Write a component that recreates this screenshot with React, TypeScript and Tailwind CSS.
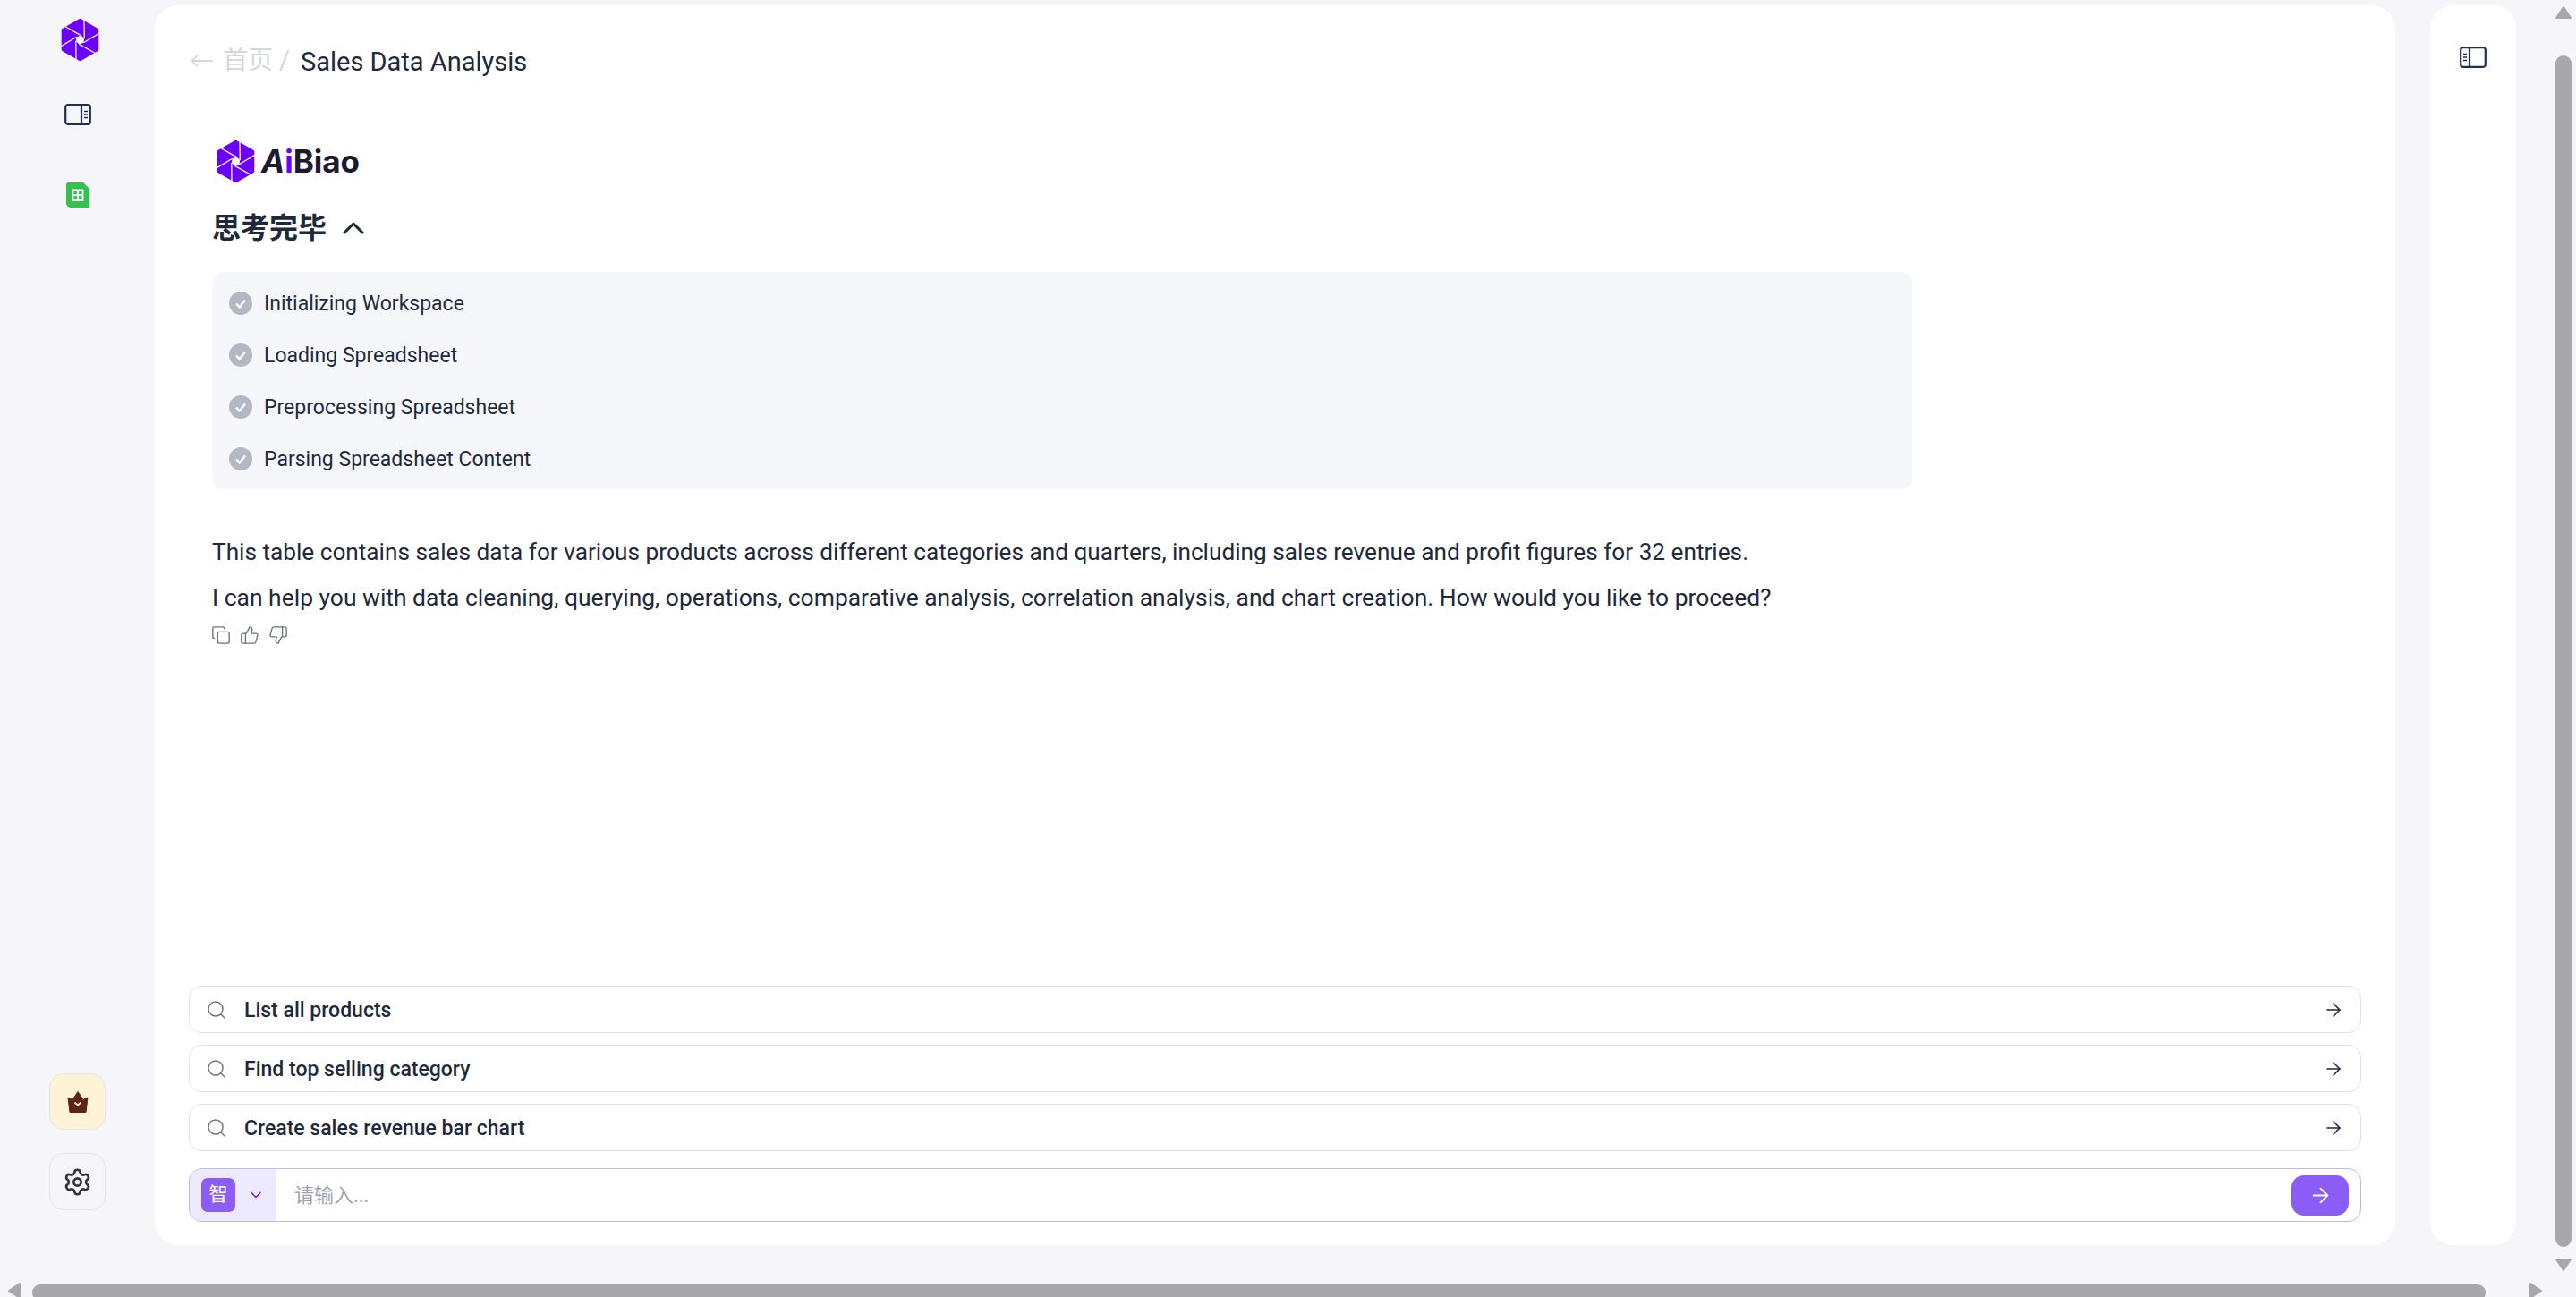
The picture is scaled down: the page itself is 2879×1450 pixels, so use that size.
import { ArrowRight, ChevronDown, ChevronUp, Copy, Search, Settings, ThumbsDown, ThumbsUp } from "lucide-react";

const steps = ["Initializing Workspace", "Loading Spreadsheet", "Preprocessing Spreadsheet", "Parsing Spreadsheet Content"];
const suggestions = ["List all products", "Find top selling category", "Create sales revenue bar chart"];
const angles = [0, 60, 120, 180, 240, 300];

function Logo({ gap, className }: { gap: string; className: string }) {
  return (
    <svg viewBox="-24 -25 48 50" className={className}>
      <path d="M0-22.5L19.5-11.2V11.2L0 22.5L-19.5 11.2V-11.2Z" fill="#6b00ff" stroke="#6b00ff" strokeWidth="3.5" strokeLinejoin="round" />
      {angles.map((a) => (
        <line key={a} x1="-20" y1="-16.8" x2="1" y2="-5" stroke={gap} strokeWidth="1.3" transform={`rotate(${a})`} />
      ))}
      <path d="M1-5L4.83-1.63L3.83 3.37L-1 5L-4.83 1.63L-3.83-3.37Z" fill={gap} />
    </svg>
  );
}

function PanelIcon({ flip, className }: { flip?: boolean; className: string }) {
  return (
    <svg viewBox="0 0 30 24" fill="none" className={className} style={flip ? { transform: "scaleX(-1)" } : undefined}>
      <rect x="1.2" y="1.2" width="27.6" height="21.6" rx="2.5" stroke="#1e2f4f" strokeWidth="2.2" />
      <path d="M19 1.5V22.5" stroke="#1e2f4f" strokeWidth="2.2" />
      <path d="M22 8.5H26M22 12H26M22 15.5H26" stroke="#1e2f4f" strokeWidth="1.6" />
    </svg>
  );
}

function SheetIcon() {
  return (
    <svg viewBox="0 0 26 28" className="h-[28px] w-[26px]">
      <path d="M0 2.5A2.5 2.5 0 0 1 2.500 0H19L26 7V28H5A5 5 0 0 1 0 23Z" fill="#34bf4f" />
      <path d="M7.500 8.500H18.500V20H7.500ZM13 8.500V20M7.500 14.200H18.500" fill="none" stroke="#fff" strokeWidth="1.800" />
    </svg>
  );
}

function CrownIcon() {
  return (
    <svg viewBox="0 0 24 24" className="h-[24px] w-[24px]">
      <path d="M1 7L6 9.500L12 0.500L18 9.500L23 7L21 23.500H3Z" fill="#5c2415" stroke="#5c2415" strokeLinejoin="round" />
      <path d="M8.500 12.500L12 15.500L15.500 12.500" fill="none" stroke="#fde9c0" strokeWidth="2" />
    </svg>
  );
}

function CheckDot() {
  return (
    <svg viewBox="0 0 26 26" className="h-[26px] w-[26px] shrink-0">
      <circle cx="13" cy="13" r="13" fill="#b4b8c4" />
      <path d="M8 13.500L11.700 17.500L18 9.500" fill="none" stroke="#fff" strokeWidth="2.400" />
    </svg>
  );
}

function Triangle({ d, className }: { d: string; className: string }) {
  return (
    <svg viewBox="0 0 18 14" className={`absolute ${className}`}>
      <path d={d} fill="#a8a7ac" stroke="#a8a7ac" strokeWidth="2" strokeLinejoin="round" />
    </svg>
  );
}

export default function App() {
  return (
    <div className="relative flex h-[1450px] w-[2879px] overflow-hidden bg-[#f6f5fa] font-['Roboto','Noto_Sans_CJK_SC',sans-serif] text-[#1e293b]">
      <aside className="flex h-[1392px] w-[173px] shrink-0 flex-col items-center">
        <Logo gap="#f6f5fa" className="ml-[6px] mt-[20px] h-[49px] w-[47px]" />
        <PanelIcon className="mt-[47px] h-[24px] w-[30px]" />
        <div className="mt-[64px]"><SheetIcon /></div>
        <div className="mt-auto flex flex-col gap-[26px] pb-[39px]">
          <button className="flex h-[63px] w-[63px] items-center justify-center rounded-[16px] border border-[#e4e4ec] bg-[#fff3d6]"><CrownIcon /></button>
          <button className="flex h-[64px] w-[63px] items-center justify-center rounded-[16px] border border-[#e4e4ec]"><Settings size={33} strokeWidth={1.9} color="#333" /></button>
        </div>
      </aside>

      <main className="mt-[6px] flex h-[1386px] w-[2504px] shrink-0 flex-col rounded-[26px] bg-white px-[38px] pb-[26px]">
        <div className="mt-[44px] flex h-[36px] items-center text-[29px]">
          <svg viewBox="0 0 25 14" fill="none" className="ml-[2px] h-[14px] w-[25px]"><path d="M25 7H1.500M8 0.500L1.500 7L8 13.500" stroke="#d5d7dc" strokeWidth="1.800" /></svg>
          <span className="ml-[11px] text-[28px] text-[#d5d7dc]">首页</span>
          <span className="ml-[7px] text-[#d5d7dc]">/</span>
          <span className="ml-[12px] pt-[3px]">Sales Data Analysis</span>
        </div>

        <div className="ml-[26px] flex-1">
          <div className="mt-[70px] flex items-center">
            <Logo gap="#ffffff" className="ml-[3px] h-[49px] w-[47px]" />
            <span className="ml-[5px] font-['Inter',sans-serif] text-[35px] leading-[47px] font-bold text-[#1c1930]">
              <span className="italic">A</span><span className="text-[#6b00ff]">i</span>Biao
            </span>
          </div>
          <div className="mt-[28px] flex h-[44px] items-center">
            <span className="text-[32px] font-bold">思考完毕</span>
            <ChevronUp size={40} strokeWidth={1.8} className="ml-[10px]" />
          </div>
          <div className="mt-[27px] flex h-[243px] w-[1900px] flex-col justify-center gap-[28px] rounded-[12px] bg-[#f6f7fb] pl-[19px]">
            {steps.map((step) => (
              <div key={step} className="flex h-[30px] items-center gap-[13px] text-[23px]">
                <CheckDot />
                <span className="pt-[3px]">{step}</span>
              </div>
            ))}
          </div>
          <p className="mt-[52px] text-[26.200px] leading-[36px]">This table contains sales data for various products across different categories and quarters, including sales revenue and profit figures for 32 entries.</p>
          <p className="mt-[15px] text-[26.450px] leading-[36px]">I can help you with data cleaning, querying, operations, comparative analysis, correlation analysis, and chart creation. How would you like to proceed?</p>
          <div className="-ml-[1px] mt-[13px] flex gap-[10px] text-[#6b7280]">
            <Copy size={22} strokeWidth={1.5} />
            <ThumbsUp size={22} strokeWidth={1.5} />
            <ThumbsDown size={22} strokeWidth={1.5} />
          </div>
        </div>

        <div className="flex flex-col gap-[13px]">
          {suggestions.map((text) => (
            <div key={text} className="flex h-[53px] items-center rounded-[14px] border border-[#e2e2ee] pl-[18px] pr-[18px]">
              <Search size={24} strokeWidth={1.4} color="#6b7280" />
              <span className="ml-[19px] flex-1 pt-[3px] text-[23px] font-medium">{text}</span>
              <ArrowRight size={24} strokeWidth={1.6} />
            </div>
          ))}
        </div>

        <div className="mt-[19px] flex h-[60px] items-center overflow-hidden rounded-[14px] border border-[#c4b5fd]">
          <div className="flex h-full w-[97px] shrink-0 items-center border-r border-[#c4b5fd] bg-[#ede9fe] pl-[13px]">
            <span className="flex h-[38px] w-[38px] items-center justify-center rounded-[7px] bg-[#8b5cf6] text-[21px] text-white">智</span>
            <ChevronDown size={20} strokeWidth={2} color="#6d28d9" className="ml-[13px]" />
          </div>
          <span className="ml-[20px] flex-1 text-[22px] text-[#9ca3af]">请输入...</span>
          <button className="mr-[13px] flex h-[45px] w-[64px] items-center justify-center rounded-[14px] bg-[#8b5cf6]">
            <ArrowRight size={27} strokeWidth={1.6} color="#fff" />
          </button>
        </div>
      </main>

      <aside className="ml-[39px] mt-[6px] flex h-[1386px] w-[96px] shrink-0 justify-center rounded-[26px] bg-white pt-[46px]">
        <PanelIcon flip className="h-[24px] w-[30px]" />
      </aside>

      <Triangle d="M9 1L17 13H1Z" className="left-[2856px] top-[7px] h-[14px] w-[18px]" />
      <div className="absolute left-[2856px] top-[62px] h-[1332px] w-[18px] rounded-full bg-[#a8a7ac]" />
      <Triangle d="M9 13L17 1H1Z" className="left-[2856px] top-[1407px] h-[14px] w-[18px]" />
      <svg viewBox="0 0 14 18" className="absolute left-[9px] top-[1434px] h-[18px] w-[14px]"><path d="M1 9L13 1V17Z" fill="#a8a7ac" stroke="#a8a7ac" strokeWidth="2" strokeLinejoin="round" /></svg>
      <div className="absolute left-[36px] top-[1436px] h-[18px] w-[2742px] rounded-full bg-[#a8a7ac]" />
      <svg viewBox="0 0 14 18" className="absolute left-[2827px] top-[1434px] h-[18px] w-[14px]"><path d="M13 9L1 1V17Z" fill="#a8a7ac" stroke="#a8a7ac" strokeWidth="2" strokeLinejoin="round" /></svg>
    </div>
  );
}
